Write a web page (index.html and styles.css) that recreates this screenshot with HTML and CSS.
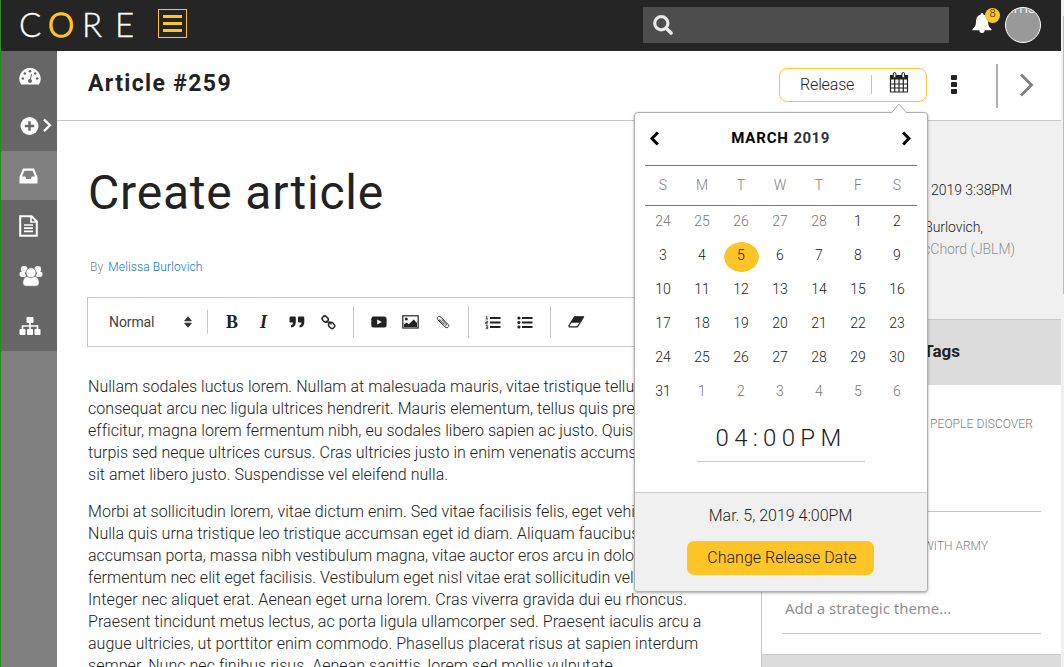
FILE: index.html
```html
<!DOCTYPE html>
<html lang="en">
<head>
<meta charset="utf-8">
<title>CORE - Article #259</title>
<link rel="stylesheet" href="styles.css">
</head>
<body>
<div class="app">
  <header class="topbar">
    <div class="logo"><span class="l-c">C</span><span class="l-o">O</span><span class="l-r">R</span><span class="l-e">E</span></div>
    <div class="menu-btn"><i></i><i></i><i></i></div>
    <div class="search"><svg width="20" height="20" viewBox="0 0 20 20"><circle cx="8.3" cy="8.3" r="6.6" fill="none" stroke="#e8e8e8" stroke-width="3.2"/><path d="M13 13l5 5" stroke="#e8e8e8" stroke-width="3.6" stroke-linecap="round"/></svg></div>
    <div class="bell"><svg width="20" height="21" viewBox="0 0 20 21"><path d="M10 0c.9 0 1.300.6 1.300 1.500C14.500 2.200 16 5 16 8.500c0 4 1.200 6 3.500 7.500v1.300H.5V16C2.800 14.500 4 12.500 4 8.500 4 5 5.500 2.200 8.700 1.500 8.700.6 9.100 0 10 0z" fill="#fff"/><path d="M7.300 17h5.400a2.700 3 0 0 1-5.400 0z" fill="#fff"/></svg><b class="badge">8</b></div>
    <div class="avatar"><span>ims</span></div>
  </header>
  <div class="shell">
    <nav class="side">
      <a><svg width="22" height="18" viewBox="0 0 22 18"><path d="M11 0A10.600 10.600 0 0 0 2.200 16.600h17.600A10.600 10.600 0 0 0 11 0z" fill="#fff"/><g fill="#666"><circle cx="3.800" cy="10.500" r="1.300"/><circle cx="5.800" cy="5.500" r="1.300"/><circle cx="11" cy="3.300" r="1.300"/><circle cx="16.200" cy="5.500" r="1.300"/><circle cx="18.200" cy="10.500" r="1.300"/><circle cx="11" cy="13" r="2"/></g><path d="M11 13l1.500-7" stroke="#666" stroke-width="1.100"/></svg></a>
      <a><svg width="34" height="20" viewBox="0 0 34 20"><circle cx="10.500" cy="10" r="9" fill="#fff"/><path d="M10.500 5.300v9.400M5.800 10h9.400" stroke="#666" stroke-width="2.400"/><path d="M25 3.500l6 5.800-6 5.800" fill="none" stroke="#fff" stroke-width="2.300"/></svg></a>
      <a class="on"><svg width="19" height="16" viewBox="0 0 19 16"><path d="M4 .5h11L18.500 9v6.500H.5V9z" fill="#fff"/><path d="M5.400 2.800h8.200L16 8.500h-3.200L11.700 11H7.300L6.200 8.500H3z" fill="#808080"/></svg></a>
      <a><svg width="19" height="22" viewBox="0 0 19 22"><path d="M1.200 1.200h11.300l5.300 5.300v14.300H1.200z" fill="none" stroke="#fff" stroke-width="2"/><path d="M12 1v6h6" fill="none" stroke="#fff" stroke-width="1.600"/><path d="M5 10h9M5 13.200h9M5 16.400h9" stroke="#fff" stroke-width="1.700"/></svg></a>
      <a><svg width="24" height="22" viewBox="0 0 24 22"><g fill="#fff"><circle cx="5.200" cy="4.300" r="3.400"/><circle cx="18.800" cy="4.300" r="3.400"/><path d="M1.500 7h4l2 5H3C1.300 12 .5 11 .5 9.500S.7 7 1.500 7zM22.500 7h-4l-2 5H21c1.700 0 2.500-1 2.500-2.500S23.300 7 22.500 7z"/><g stroke="#666" stroke-width=".7"><path d="M7 11.500h10c2 1 3.200 3.500 3.200 6.200 0 2.200-1.300 3.500-3.300 3.500H7.100c-2 0-3.300-1.300-3.300-3.500C3.800 15 5 12.500 7 11.500z"/><circle cx="12" cy="7.700" r="5"/></g></g></svg></a>
      <a><svg width="22" height="18" viewBox="0 0 22 18"><g fill="#fff"><rect x="7.500" width="7" height="6" rx="1"/><rect x=".5" y="12" width="6" height="6" rx="1"/><rect x="8" y="12" width="6" height="6" rx="1"/><rect x="15.500" y="12" width="6" height="6" rx="1"/></g><path d="M11 5v8M3.500 12.500V9h15v3.500" fill="none" stroke="#fff" stroke-width="1.700"/></svg></a>
    </nav>
    <main class="main">
      <div class="titlebar">
        <h2>Article #259</h2>
        <div class="release"><span>Release</span><i></i><svg width="20" height="21" viewBox="0 0 20 21"><path d="M1.600 3h16.800v4.500H1.600z" fill="#222"/><path d="M1.500 3.500h17V20h-17zM1.500 12h17M1.500 16h17M5.700 7v13M10 7v13M14.300 7v13" fill="none" stroke="#222" stroke-width="1.200"/><rect x="4.300" y=".6" width="2.600" height="5" rx="1.200" fill="#fff" stroke="#222"/><rect x="13" y=".6" width="2.600" height="5" rx="1.200" fill="#fff" stroke="#222"/></svg></div>
        <div class="dots"><i></i><i></i><i></i></div>
        <div class="next"><svg width="15" height="24" viewBox="0 0 15 24"><path d="M2 1.500L12.500 12 2 22.500" fill="none" stroke="#808080" stroke-width="2.800"/></svg></div>
      </div>
      <div class="cols">
        <section class="editor">
          <h1>Create article</h1>
          <p class="by"><span>By</span> <a>Melissa Burlovich</a></p>
          <div class="tools">
            <span class="fmt">Normal</span>
            <svg width="8" height="12" viewBox="0 0 8 12"><path d="M.7 4.800L4 .8l3.300 4zM.7 7.200L4 11.200l3.300-4z" fill="#333" stroke="#333" stroke-linejoin="round"/></svg>
            <div class="grp g1"><b>B</b><em>I</em>
              <svg width="16" height="12" viewBox="0 0 16 12"><path d="M1.500.5h4c1 0 1.300.5 1.300 1.500v4c0 3-1.500 5.300-4.800 5.500V9.300C3.500 9 4 8 4 6.500H1.500C.6 6.500.5 6 .5 5.300V2C.5 1 .8.5 1.500.5zM10 .5h4c1 0 1.300.5 1.300 1.500v4c0 3-1.500 5.300-4.800 5.500V9.300c1.500-.3 2-1.300 2-2.800H10C9.100 6.500 9 6 9 5.300V2C9 1 9.300.5 10 .5z" fill="#222"/></svg>
              <svg class="link" width="15" height="15" viewBox="0 0 15 15"><g fill="none" stroke="#222" stroke-width="1.500"><rect x="1" y="1.600" width="6.400" height="5" rx="2.400" transform="rotate(45 4.200 4.100)"/><rect x="7.400" y="7.900" width="6.400" height="5" rx="2.400" transform="rotate(45 10.600 10.400)"/><path d="M4.800 5.800c1 2 3 .8 4.200 1.600s1 1.600 1 2.200"/></g></svg></div>
            <div class="grp g2">
              <svg width="16" height="12" viewBox="0 0 16 12"><rect x=".3" y=".6" width="15.300" height="10.800" rx="2.500" fill="#222"/><path d="M6.200 3.400v5l4.600-2.500z" fill="#fff"/></svg>
              <svg width="17" height="14" viewBox="0 0 17 14"><rect x=".8" y=".8" width="15.400" height="12.200" fill="#fff" stroke="#222" stroke-width="1.200"/><path d="M2 12V9.500l2.700-2 2 1.700 5-4.700L15 8v4z" fill="#222"/><circle cx="4.300" cy="4" r="1.500" fill="#222"/></svg>
              <svg class="clip" width="14" height="14" viewBox="0 0 14 14"><path d="M8.800 9.600L4.500 5.300C3.500 4.300 2.500 5.200 3.500 6.300l5.600 5.700c2 2 5-.5 3-2.600L4.800 2.100C2.700 0 .2 2.600 1.800 4.500l5.600 5.800M6 4.500l4.300 4.300c.9 1-.4 2-1.300 1.100" fill="none" stroke="#333"/></svg></div>
            <div class="grp g3">
              <svg width="16" height="15" viewBox="0 0 16 15"><path d="M5 3h10.500M5 7.500h10.500M5 12h10.500" stroke="#222" stroke-width="1.800"/><path d="M.8 1.300h1V4M.5 4h2.600M.7 6.200h2v1.300h-2v1.400h2.200M.7 10.700h2v3h-2M1 12.200h1.500" fill="none" stroke="#222" stroke-width=".8"/></svg>
              <svg width="16" height="13" viewBox="0 0 16 13"><path d="M5 2h10.500M5 6.500h10.500M5 11h10.500" stroke="#222" stroke-width="1.900"/><g fill="#222"><circle cx="1.900" cy="2" r="1.600"/><circle cx="1.900" cy="6.500" r="1.600"/><circle cx="1.900" cy="11" r="1.600"/></g></svg></div>
            <div class="grp g4">
              <svg width="17" height="12" viewBox="0 0 17 12"><path d="M6.500.8h9.200l-6.200 10H1.200L.8 10z" fill="#fff" stroke="#222" stroke-linejoin="round" stroke-width="1.200"/><path d="M6.500.8h9.200l-4 6H2.500z" fill="#222"/></svg></div>
          </div>
          <p class="para">
            <span>Nullam sodales luctus lorem. Nullam at malesuada mauris, vitae tristique tellus,</span>
            <span>consequat arcu nec ligula ultrices hendrerit. Mauris elementum, tellus quis pretium</span>
            <span>efficitur, magna lorem fermentum nibh, eu sodales libero sapien ac justo. Quisque</span>
            <span>turpis sed neque ultrices cursus. Cras ultricies justo in enim venenatis accumsan,</span>
            <span>sit amet libero justo. Suspendisse vel eleifend nulla.</span>
          </p>
          <p class="para">
            <span>Morbi at sollicitudin lorem, vitae dictum enim. Sed vitae facilisis felis, eget vehicula</span>
            <span>Nulla quis urna tristique leo tristique accumsan eget id diam. Aliquam faucibus</span>
            <span class="snug">accumsan porta, massa nibh vestibulum magna, vitae auctor eros arcu in dolor</span>
            <span>fermentum nec elit eget facilisis. Vestibulum eget nisl vitae erat sollicitudin velit</span>
            <span class="loose">Integer nec aliquet erat. Aenean eget urna lorem. Cras viverra gravida dui eu rhoncus.</span>
            <span>Praesent tincidunt metus lectus, ac porta ligula ullamcorper sed. Praesent iaculis arcu a</span>
            <span>augue ultricies, ut porttitor enim commodo. Phasellus placerat risus at sapien interdum</span>
            <span>semper. Nunc nec finibus risus. Aenean sagittis, lorem sed mollis vulputate.</span>
          </p>
        </section>
        <aside class="panel">
          <div class="meta"><p class="m1">March 5, 2019 3:38PM</p><p class="m2">Melissa Burlovich,</p><p class="m3">Lewis-McChord (JBLM)</p></div>
          <div class="tagbar">Themes &amp; Tags</div>
          <div class="field f1"><label>HELP PEOPLE DISCOVER</label></div>
          <div class="field f2"><label>ALIGN WITH ARMY</label><div class="ph">Add a strategic theme...</div></div>
          <div class="nextbar"></div>
        </aside>
      </div>
    </main>
  </div>
  <div class="pop">
    <svg class="arrow" width="16" height="10" viewBox="0 0 16 10"><path d="M1 9.500L8 1l7 8.500V10H1z" fill="#fff"/><path d="M.8 9.500L8 1l7.200 8.500" fill="none" stroke="#b0b0b0"/></svg>
    <div class="cal-head"><svg width="11" height="15" viewBox="0 0 11 15"><path d="M8.800 1.500L3 7.500l5.800 6" fill="none" stroke="#000" stroke-width="3"/></svg><strong>MARCH <span class="yr">2019</span></strong><svg width="11" height="15" viewBox="0 0 11 15"><path d="M2.200 1.500L8 7.500l-5.800 6" fill="none" stroke="#000" stroke-width="3"/></svg></div>
    <div class="week"><span>S</span><span>M</span><span>T</span><span>W</span><span>T</span><span>F</span><span>S</span></div>
    <div class="days"><span class="o">24</span><span class="o">25</span><span class="o">26</span><span class="o">27</span><span class="o">28</span><span>1</span><span>2</span><span>3</span><span>4</span><span class="sel">5</span><span>6</span><span>7</span><span>8</span><span>9</span><span>10</span><span>11</span><span>12</span><span>13</span><span>14</span><span>15</span><span>16</span><span>17</span><span>18</span><span>19</span><span>20</span><span>21</span><span>22</span><span>23</span><span>24</span><span>25</span><span>26</span><span>27</span><span>28</span><span>29</span><span>30</span><span>31</span><span class="o">1</span><span class="o">2</span><span class="o">3</span><span class="o">4</span><span class="o">5</span><span class="o">6</span></div>
    <div class="time">04:00PM</div>
    <div class="foot"><p>Mar. 5, 2019 4:00PM</p><div class="btn">Change Release Date</div></div>
  </div>
  <div class="scroll"></div>
</div>
</body>
</html>
```
FILE: styles.css
```css
* { box-sizing: border-box; }
body { margin: 0; font-family: Roboto, "Liberation Sans", sans-serif; font-weight: 300; color: #222; }
p, h1, h2 { margin: 0; }
svg { display: block; flex: none; }
.app { position: relative; width: 1064px; height: 667px; overflow: hidden; background: #f0f0f0; border-left: 1px solid #258b25; padding-right: 3px; display: flex; flex-direction: column; }
.topbar { height: 51px; flex: none; background: #252525; display: flex; align-items: center; padding-left: 18px; }
.logo { display: flex; width: 139px; height: 51px; font: 300 33px/48px Lato, sans-serif; color: #fff; -webkit-text-stroke: .35px #fff; }
.logo .l-c { width: 29px; }
.logo .l-o { width: 34px; color: #ffc426; -webkit-text-stroke: 1.400px #ffc426; }
.logo .l-r { width: 33px; }
.menu-btn { width: 29px; height: 29px; margin-top: -4px; border: 1px solid #ffc426; display: flex; flex-direction: column; justify-content: center; align-items: center; gap: 4px; }
.menu-btn i { width: 19px; height: 3px; background: #ffc426; }
.search { margin-left: 456px; width: 306px; height: 36px; margin-top: -1px; background: #4d4d4d; display: flex; align-items: center; padding-left: 10px; }
.bell { position: relative; margin-left: 23px; margin-right: 1px; margin-top: -5px; width: 20px; height: 21px; }
.badge { position: absolute; left: 13px; top: -5px; width: 15px; height: 15px; border-radius: 50%; background: #ffc426; color: #222; font: 300 11px/12px Roboto, sans-serif; text-align: center; }
.avatar { margin-left: 12px; margin-top: -2px; width: 36px; height: 36px; border-radius: 50%; border: 1px solid #fff; background: #999; overflow: hidden; color: #fff; font-size: 16px; line-height: 0; text-align: center; }
.shell { flex: 1; display: flex; min-height: 0; }
.side { width: 56px; flex: none; background: linear-gradient(#666 300px, #808080 300px); display: flex; flex-direction: column; }
.side a { height: 50px; display: flex; align-items: center; padding: 2px 0 0 18px; }
.side a:nth-child(2) { padding-top: 0; }
.side .on { background: #808080; height: 49px; padding-top: 1px; }
.main { flex: 1; background: #fff; display: flex; flex-direction: column; min-width: 0; }
.titlebar { height: 70px; flex: none; border-bottom: 1px solid #c8c8c8; display: flex; align-items: center; padding-left: 31px; }
h2 { width: 691px; font-size: 23px; font-weight: 700; letter-spacing: 1.350px; line-height: 30px; margin-top: -3px; }
.release { width: 148px; height: 34px; margin-top: -2px; border: 1px solid #ffc426; border-radius: 8px; display: flex; align-items: center; padding-left: 20px; font-size: 16px; }
.release span { width: 71px; letter-spacing: -.150px; }
.release i { width: 1px; height: 19px; background: #ffc426; margin-right: 17px; }
.release svg { margin-top: -4px; }
.dots { margin-left: 24px; margin-top: -2px; width: 6px; display: flex; flex-direction: column; gap: 2px; }
.dots i { height: 5px; border-radius: 1px; background: #222; }
.next { margin-left: 39px; height: 44px; border-left: 2px solid #b0b0b0; display: flex; align-items: center; padding: 0 0 2px 21px; }
.cols { flex: 1; display: flex; min-height: 0; }
.editor { width: 704px; flex: none; padding: 44px 30px 0; }
h1 { padding-left: 1px; font-size: 48px; font-weight: 400; letter-spacing: .800px; line-height: 56px; }
.by { margin: 38px 0 0 3px; font-size: 12px; letter-spacing: .120px; line-height: 17px; color: #808080; }
.by span { margin-right: 2px; }
.by a { color: #0b78bf; }
.tools { height: 50px; margin-top: 21px; border: 1px solid #c8c8c8; display: flex; align-items: center; padding-left: 21px; }
.fmt { width: 75px; font: 14px Roboto; letter-spacing: -.100px; color: #444; }
.grp { height: 32px; border-left: 1px solid #c8c8c8; display: flex; align-items: center; }
.g1 { height: 24px; margin-left: 15px; width: 146px; padding-left: 18px; gap: 14px; }
.g1 b { width: 20px; font: 700 18px "Liberation Serif", serif; }
.g1 em { width: 15px; font: italic 700 18px "Liberation Serif", serif; }
.link { margin-left: 2px; }
.g2 { width: 115px; padding-left: 17px; gap: 15px; }
.clip { margin-left: 2px; }
.g3 { width: 82px; padding-left: 16px; gap: 16px; }
.g4 { padding-left: 17px; }
.para { margin-top: 29px; padding-left: 1px; font-size: 16px; letter-spacing: .040px; line-height: 22px; }
.para + .para { margin-top: 15px; }
.para span { display: block; white-space: nowrap; }
.para .loose { letter-spacing: .100px; }
.para .snug { letter-spacing: 0; }
.panel { flex: 1; border-left: 1px solid #c8c8c8; display: flex; flex-direction: column; text-align: right; white-space: nowrap; min-width: 0; }
.meta { height: 198px; flex: none; background: #f0f0f0; font-size: 14px; letter-spacing: -.050px; line-height: 22px; padding-top: 58px; }
.m1 { padding-right: 49px; }
.m2 { padding: 15px 78px 0 0; }
.m3 { padding-right: 46px; color: #909090; }
.tagbar { height: 66px; flex: none; border-top: 1px solid #c8c8c8; background: #dcdcdc; font-size: 17px; font-weight: 700; line-height: 62px; padding-right: 101px; }
.field { margin: 0 20px; border-bottom: 1px solid #c8c8c8; font-size: 12px; color: #808080; flex: none; }
.f1 { height: 127px; padding: 31px 8px 0 0; line-height: 16px; letter-spacing: .090px; }
.f2 { height: 122px; padding: 26px 53px 0 0; line-height: 16px; }
.ph { text-align: left; padding-left: 3px; margin-top: 42px; line-height: 24px; font-family: "Noto Sans", sans-serif; font-size: 15px; letter-spacing: -.030px; font-weight: 400; color: #909090; }
.nextbar { margin-top: 20px; flex: 1; border-top: 1px solid #c8c8c8; background: #dcdcdc; }
.pop { position: absolute; left: 633px; top: 112px; width: 294px; height: 480px; background: #fff; border: 1px solid #b0b0b0; border-radius: 4px; box-shadow: 0 1px 3px rgba(0,0,0,.35); display: flex; flex-direction: column; }
.arrow { position: absolute; left: 256px; top: -10px; }
.cal-head { height: 53px; margin: 0 10px; border-bottom: 1px solid #777; display: flex; justify-content: space-between; align-items: center; padding: 0 5px 2px 4px; font-size: 15px; letter-spacing: .850px; color: #000; }
.cal-head strong { font-weight: 700; }
.yr { color: #2c3540; letter-spacing: .500px; }
.week, .days { display: grid; grid-template-columns: repeat(7, 39px); text-align: center; }
.week { height: 40px; margin: 0 10px; border-bottom: 1px solid #777; line-height: 38px; font-size: 14px; color: #808080; }
.week span { margin-left: -3px; }
.days { margin: 0 8px; grid-auto-rows: 34px; line-height: 31px; font-size: 14px; }
.days span { padding-left: 1px; }
.days .o { color: #777; }
.sel { background: radial-gradient(17.500px 15px at 20.500px 17px, #ffc426 97%, transparent 100%); }
.time { width: 168px; height: 51px; margin: 1px auto 0; border-bottom: 1px solid #c8c8c8; font-size: 24px; line-height: 55px; text-align: center; letter-spacing: 5.300px; white-space: nowrap; }
.foot { margin-top: auto; height: 99px; border-top: 1px solid #ccc; background: #f0f0f0; border-radius: 0 0 4px 4px; text-align: center; font-size: 16px; }
.foot p { line-height: 20px; padding: 13px 1px 0 0; }
.btn { width: 187px; height: 34px; margin: 15px auto 0 52px; border-radius: 7px; background: #ffc426; line-height: 33px; padding-left: 3px; }
.scroll { position: absolute; right: 0; top: 16px; width: 1px; height: 278px; background: #bbb; }
```
